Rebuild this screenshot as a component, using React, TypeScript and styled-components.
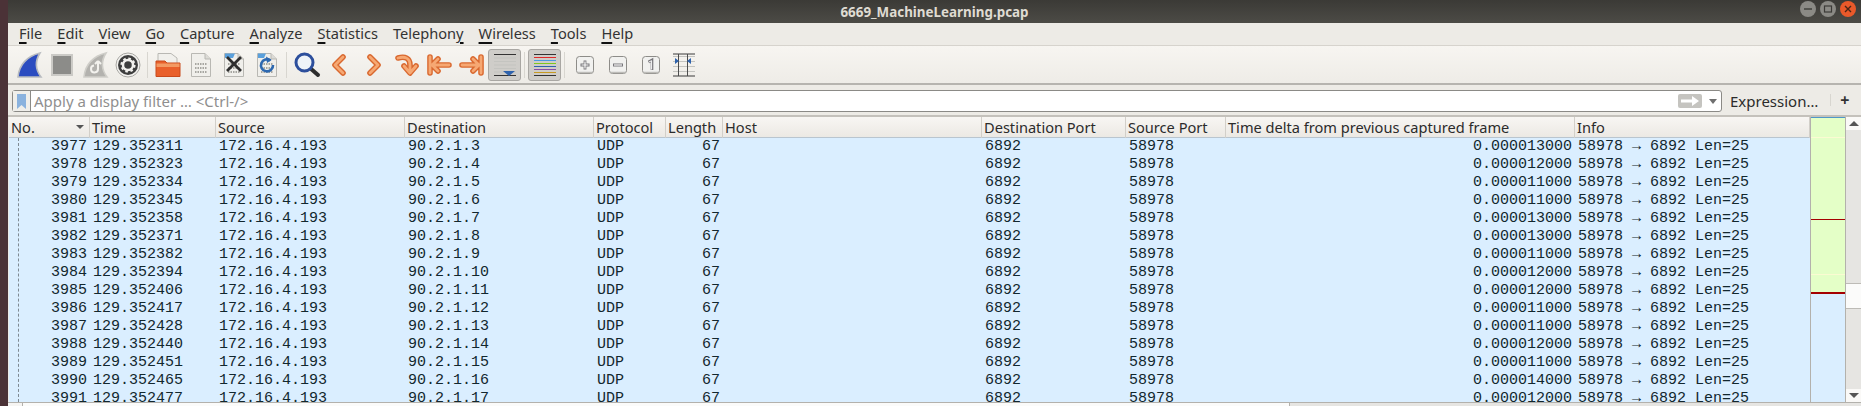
import styled, { createGlobalStyle } from "styled-components";

const COLUMNS = "81px 126px 189px 189px 72px 57px 259px 144px 100px 349px 235px";

const packets = [
  [3977, "129.352311", 3, "0.000013000"],
  [3978, "129.352323", 4, "0.000012000"],
  [3979, "129.352334", 5, "0.000011000"],
  [3980, "129.352345", 6, "0.000011000"],
  [3981, "129.352358", 7, "0.000013000"],
  [3982, "129.352371", 8, "0.000013000"],
  [3983, "129.352382", 9, "0.000011000"],
  [3984, "129.352394", 10, "0.000012000"],
  [3985, "129.352406", 11, "0.000012000"],
  [3986, "129.352417", 12, "0.000011000"],
  [3987, "129.352428", 13, "0.000011000"],
  [3988, "129.352440", 14, "0.000012000"],
  [3989, "129.352451", 15, "0.000011000"],
  [3990, "129.352465", 16, "0.000014000"],
  [3991, "129.352477", 17, "0.000012000"],
] as const;

const menus: [string, string, string][] = [
  ["", "F", "ile"],
  ["", "E", "dit"],
  ["", "V", "iew"],
  ["", "G", "o"],
  ["", "C", "apture"],
  ["", "A", "nalyze"],
  ["", "S", "tatistics"],
  ["Telephon", "y", ""],
  ["", "W", "ireless"],
  ["", "T", "ools"],
  ["", "H", "elp"],
];

const headers = [
  "No.",
  "Time",
  "Source",
  "Destination",
  "Protocol",
  "Length",
  "Host",
  "Destination Port",
  "Source Port",
  "Time delta from previous captured frame",
  "Info",
];

const Fin = ({ muted }: { muted?: boolean }) => (
  <svg width="28" height="28" viewBox="0 0 28 28">
    <path
      d="M3 26C4 14 12 5 25 2C20 10 20 18 26 26Z"
      fill={muted ? "#b3b2ae" : "#2b4cc0"}
      stroke={muted ? "#cfcec9" : "#b9bcc0"}
      strokeWidth="1.6"
    />
    {muted && (
      <path
        d="M17 10v8a3.5 3.5 0 1 1-4-3.5M17 10l-3 3M17 10l3 3"
        fill="none"
        stroke="#f3f2ee"
        strokeWidth="2"
      />
    )}
  </svg>
);

const Stop = () => (
  <svg width="24" height="24" viewBox="0 0 24 24">
    <rect x="2" y="2" width="20" height="20" fill="#8c8c89" stroke="#cbcac6" strokeWidth="2" />
  </svg>
);

const Gear = () => (
  <svg width="26" height="26" viewBox="0 0 26 26">
    <circle cx="13" cy="13" r="12" fill="#f2f1ee" stroke="#a9a8a4" strokeWidth="1" />
    <circle cx="13" cy="13" r="10" fill="#3e3e3e" />
    <circle cx="13" cy="13" r="5" fill="none" stroke="#f2f1ee" strokeWidth="2.5" />
    <circle cx="13" cy="13" r="6.6" fill="none" stroke="#f2f1ee" strokeWidth="2" strokeDasharray="2.6 2.6" />
  </svg>
);

const Doc = ({ children }: { children?: React.ReactNode }) => (
  <svg width="22" height="26" viewBox="0 0 22 26">
    <path d="M1.5 1.5H15L20.5 7V24.5H1.5Z" fill="#f0efeb" stroke="#b9b8b3" />
    <path d="M15 1.5V7H20.5" fill="#dcdbd6" stroke="#b9b8b3" />
    <path
      d="M5 12H17M5 16H17M5 20H17"
      stroke="#a7a6a1"
      strokeWidth="2"
      strokeDasharray="1.5 1"
    />
    {children}
  </svg>
);

const OpenFile = () => (
  <svg width="26" height="26" viewBox="0 0 26 26">
    <path d="M3 1.5H16L22 6V14H3Z" fill="#f1f0ec" stroke="#b9b8b3" />
    <path d="M1 9H10L12 11H25V24.5H1Z" fill="#e9602b" stroke="#c84a1c" />
    <path d="M1.5 11.5H24.5V15H1.5Z" fill="#f39a63" />
  </svg>
);

const CloseFile = () => (
  <Doc>
    <path d="M2 1.5H12L10 6H2Z" fill="#5aa0dc" />
    <path d="M4 5L18 19M18 5L4 19" stroke="#2d2d2d" strokeWidth="2.8" />
  </Doc>
);

const ReloadFile = () => (
  <Doc>
    <path d="M2 1.5H10L8 6H2Z" fill="#5aa0dc" />
    <path
      d="M14.5 8.5A6 6 0 1 0 17 13"
      fill="none"
      stroke="#2d68b0"
      strokeWidth="2.6"
    />
    <path d="M10 4.5L15.5 8L11 11Z" fill="#2d68b0" />
  </Doc>
);

const Search = () => (
  <svg width="28" height="28" viewBox="0 0 28 28">
    <path d="M17 17L25 24" stroke="#2d2d2d" strokeWidth="4" strokeLinecap="round" />
    <circle cx="11.5" cy="11.5" r="8.5" fill="#eef3f8" stroke="#2d4f9c" strokeWidth="3" />
  </svg>
);

const Stroke = ({ d }: { d: string }) => (
  <>
    <path d={d} fill="none" stroke="#d9682f" strokeWidth="5.6" strokeLinecap="round" strokeLinejoin="round" />
    <path d={d} fill="none" stroke="#f6a873" strokeWidth="2.8" strokeLinecap="round" strokeLinejoin="round" />
  </>
);

const Arrow = ({ d }: { d: string }) => (
  <svg width="26" height="26" viewBox="0 0 26 26">
    <Stroke d={d} />
  </svg>
);

const LineList = ({ colors, marker }: { colors: string[]; marker?: boolean }) => (
  <svg width="24" height="24" viewBox="0 0 24 24">
    {colors.map((c, i) => (
      <rect key={i} x="1" y={1 + i * (21 / (colors.length - 1))} width="22" height="1" fill={c} />
    ))}
    {marker && <path d="M10 18H22L16 23Z" fill="#2f63ad" />}
  </svg>
);

const ZoomKey = ({ children }: { children: React.ReactNode }) => (
  <svg width="20" height="20" viewBox="0 0 20 20">
    <rect x="1.5" y="1.5" width="17" height="17" rx="3" fill="#f1f1ef" stroke="#8d8c88" />
    <path d="M2.5 17.5H17.5" stroke="#bdbcb8" strokeWidth="1.5" />
    {children}
  </svg>
);

const ResizeColumns = () => (
  <svg width="24" height="24" viewBox="0 0 24 24">
    <path d="M1 3.5H23M1 8.5H23M1 13.5H23M1 18.5H23" stroke="#c4c4c0" />
    <path d="M1 1H23M1 23H23" stroke="#3a3a3a" />
    <path d="M6.5 1V23M15.5 1V23" stroke="#4c4c4c" />
    <path d="M3 5L7 8L3 11ZM19 5L15 8L19 11Z" fill="#2f63ad" />
  </svg>
);

const App = () => (
  <Window>
    <GlobalStyle />
    <DesktopEdge />
    <Main>
      <TitleBar>
        <Title>6669_MachineLearning.pcap</Title>
        <WindowButtons>
          <WindowButton>
            <svg width="10" height="10" viewBox="0 0 10 10">
              <path d="M1 5H9" stroke="#3c3b37" strokeWidth="1.4" />
            </svg>
          </WindowButton>
          <WindowButton>
            <svg width="10" height="10" viewBox="0 0 10 10">
              <rect x="1.5" y="2" width="7" height="6" fill="none" stroke="#3c3b37" strokeWidth="1.2" />
            </svg>
          </WindowButton>
          <WindowButton $close>
            <svg width="10" height="10" viewBox="0 0 10 10">
              <path d="M2 2L8 8M8 2L2 8" stroke="#4a2415" strokeWidth="1.4" />
            </svg>
          </WindowButton>
        </WindowButtons>
      </TitleBar>

      <MenuBar>
        {menus.map(([before, key, after]) => (
          <MenuItem key={before + key + after}>
            {before}
            <Mnemonic>{key}</Mnemonic>
            {after}
          </MenuItem>
        ))}
      </MenuBar>

      <ToolBar>
        <ToolButton><Fin /></ToolButton>
        <ToolButton><Stop /></ToolButton>
        <ToolButton><Fin muted /></ToolButton>
        <ToolButton><Gear /></ToolButton>
        <ToolSeparator />
        <ToolButton><OpenFile /></ToolButton>
        <ToolButton><Doc /></ToolButton>
        <ToolButton><CloseFile /></ToolButton>
        <ToolButton><ReloadFile /></ToolButton>
        <ToolSeparator />
        <ToolButton><Search /></ToolButton>
        <ToolButton><Arrow d="M16 5L8 13L16 21" /></ToolButton>
        <ToolButton><Arrow d="M10 5L18 13L10 21" /></ToolButton>
        <ToolButton><Arrow d="M5 6C12 4 17 6 17 13V19M11 14L17 21L23 14" /></ToolButton>
        <ToolButton><Arrow d="M4 5V21M23 13H6M12 7L6 13L12 19" /></ToolButton>
        <ToolButton><Arrow d="M22 5V21M3 13H20M14 7L20 13L14 19" /></ToolButton>
        <ToolButton $checked>
          <LineList marker colors={["#333", "#c4c4c0", "#c4c4c0", "#c4c4c0", "#c4c4c0", "#c4c4c0", "#333"]} />
        </ToolButton>
        <ToolSeparator />
        <ToolButton $checked>
          <LineList colors={["#333", "#e02a2a", "#4c9be0", "#7fc81e", "#2f63ad", "#8a4fa8", "#c79a22", "#333"]} />
        </ToolButton>
        <ToolSeparator />
        <ToolButton>
          <ZoomKey>
            <path d="M10 5.5V14.5M5.5 10H14.5" stroke="#77767a" strokeWidth="2.8" />
            <path d="M10 6.5V13.5M6.5 10H13.5" stroke="#fafafa" strokeWidth="1.2" />
          </ZoomKey>
        </ToolButton>
        <ToolButton>
          <ZoomKey>
            <path d="M5 10H15" stroke="#77767a" strokeWidth="3" />
            <path d="M6 10H14" stroke="#fafafa" strokeWidth="1.2" />
          </ZoomKey>
        </ToolButton>
        <ToolButton>
          <ZoomKey>
            <path d="M7.5 7L11 5V15" fill="none" stroke="#77767a" strokeWidth="2.6" />
            <path d="M8 7L10.6 5.7V14.5" fill="none" stroke="#fafafa" strokeWidth="1" />
          </ZoomKey>
        </ToolButton>
        <ToolButton><ResizeColumns /></ToolButton>
      </ToolBar>

      <FilterBar>
        <FilterBox>
          <BookmarkCell>
            <svg width="9" height="15" viewBox="0 0 9 15">
              <path d="M0 0H9V15L4.5 11L0 15Z" fill="#8ab2de" />
            </svg>
          </BookmarkCell>
          <FilterHint>Apply a display filter … &lt;Ctrl-/&gt;</FilterHint>
          <ApplyButton>
            <svg width="18" height="10" viewBox="0 0 18 10">
              <path d="M0 3.5H11V0L18 5L11 10V6.5H0Z" fill="#fff" />
            </svg>
          </ApplyButton>
          <DropArrow />
        </FilterBox>
        <ExpressionLabel>Expression…</ExpressionLabel>
        <PlusDivider />
        <PlusLabel>+</PlusLabel>
      </FilterBar>

      <PacketArea>
        <PacketPane>
          <ListHeader>
            {headers.map((h, i) => (
              <HeaderCell key={h}>
                {h}
                {i === 0 && <SortCaret />}
              </HeaderCell>
            ))}
          </ListHeader>
          <Rows>
            <TreeLine />
            {packets.map(([no, time, host, delta]) => (
              <Row key={no}>
                <Cell $right>{no}</Cell>
                <Cell>{time}</Cell>
                <Cell>172.16.4.193</Cell>
                <Cell>90.2.1.{host}</Cell>
                <Cell>UDP</Cell>
                <Cell $right>67</Cell>
                <Cell />
                <Cell>6892</Cell>
                <Cell>58978</Cell>
                <Cell $right>{delta}</Cell>
                <Cell>58978 → 6892 Len=25</Cell>
              </Row>
            ))}
          </Rows>
        </PacketPane>

        <MiniMap>
          <MapBand $height={1} $color="#4f97c9" />
          <MapBand $height={19} $color="#e4ffc7" />
          <MapBand $height={1} $color="#fbfbd2" />
          <MapBand $height={81} $color="#e4ffc7" />
          <MapBand $height={1} $color="#a40000" />
          <MapBand $height={54} $color="#e4ffc7" />
          <MapBand $height={1} $color="#fbfbd2" />
          <MapBand $height={17} $color="#e4ffc7" />
          <MapBand $height={2} $color="#a40000" />
          <MapBand $height={109} $color="#daeeff" />
        </MiniMap>

        <ScrollBar>
          <ScrollEnd>
            <ScrollCaret />
          </ScrollEnd>
          <ScrollTrack $height={153} />
          <ScrollThumb />
          <ScrollTrack $height={80} />
          <ScrollEnd>
            <ScrollCaret $down />
          </ScrollEnd>
        </ScrollBar>
      </PacketArea>

      <BottomScroll>
        <BottomEnd />
        <BottomThumb />
      </BottomScroll>
    </Main>
  </Window>
);

const GlobalStyle = createGlobalStyle`
  html, body {
    margin: 0;
    height: 406px;
    overflow: hidden;
    background: #edebe6;
  }
`;

const UI_FONT = `"Noto Sans", "DejaVu Sans", sans-serif`;

const Window = styled.div`
  display: flex;
  width: 1861px;
  height: 406px;
  overflow: hidden;
  font-family: ${UI_FONT};
`;

const DesktopEdge = styled.div`
  flex: 0 0 8px;
  background: #4b3237;
`;

const Main = styled.div`
  flex: 1;
  min-width: 0;
  display: flex;
  flex-direction: column;
`;

const TitleBar = styled.div`
  flex: 0 0 23px;
  position: relative;
  display: flex;
  align-items: center;
  justify-content: center;
  background: linear-gradient(#3b3a36, #4c4b46);
`;

const Title = styled.div`
  font-size: 13.4px;
  font-weight: 700;
  color: #dfdbd2;
`;

const WindowButtons = styled.div`
  position: absolute;
  right: 5px;
  top: 1px;
  display: flex;
  gap: 4px;
`;

const WindowButton = styled.div<{ $close?: boolean }>`
  width: 16px;
  height: 16px;
  border-radius: 50%;
  display: flex;
  align-items: center;
  justify-content: center;
  background: ${({ $close }) => ($close ? "#e9592a" : "#8b8a85")};
`;

const MenuBar = styled.div`
  flex: 0 0 22px;
  box-sizing: border-box;
  display: flex;
  align-items: center;
  gap: 15px;
  padding: 0 0 2px 11px;
  background: #edebe6;
  border-bottom: 1px solid #d6d3cd;
`;

const MenuItem = styled.div`
  font-size: 14.6px;
  line-height: 20px;
  color: #333;
`;

const Mnemonic = styled.span`
  text-decoration: underline;
  text-decoration-thickness: 2px;
  text-underline-offset: 3px;
  text-decoration-color: #111;
`;

const ToolBar = styled.div`
  flex: 0 0 39px;
  box-sizing: border-box;
  display: flex;
  align-items: center;
  padding-left: 4px;
  background: linear-gradient(#f7f5f1, #eeece7);
  border-bottom: 2px solid #b6b4af;
`;

const ToolButton = styled.div<{ $checked?: boolean }>`
  flex: 0 0 33px;
  height: 32px;
  box-sizing: border-box;
  display: flex;
  align-items: center;
  justify-content: center;
  border-radius: 3px;
  background: ${({ $checked }) => ($checked ? "#cfcdc9" : "transparent")};
  border: 1px solid ${({ $checked }) => ($checked ? "#a9a7a3" : "transparent")};
`;

const ToolSeparator = styled.div`
  flex: 0 0 1px;
  height: 26px;
  margin: 0 3px;
  background: #d8d6d0;
`;

const FilterBar = styled.div`
  flex: 0 0 32px;
  box-sizing: border-box;
  display: flex;
  align-items: flex-start;
  padding: 5px 0 0 4px;
  background: #edebe6;
  border-bottom: 2px solid #c4c1bb;
`;

const FilterBox = styled.div`
  flex: 0 0 1710px;
  height: 22px;
  box-sizing: border-box;
  display: flex;
  align-items: center;
  background: #fff;
  border: 1px solid #8b8a86;
  border-radius: 3px;
`;

const BookmarkCell = styled.div`
  flex: 0 0 18px;
  height: 100%;
  box-sizing: border-box;
  display: flex;
  align-items: center;
  justify-content: center;
  background: #efeeea;
  border-right: 1px solid #8b8a86;
`;

const FilterHint = styled.div`
  flex: 1;
  padding-left: 3px;
  font-size: 15px;
  color: #8f8f8f;
`;

const ApplyButton = styled.div`
  flex: 0 0 24px;
  height: 14px;
  display: flex;
  align-items: center;
  justify-content: center;
  border-radius: 2px;
  background: #c5c4c0;
`;

const DropArrow = styled.div`
  margin: 0 4px 0 7px;
  width: 0;
  height: 0;
  border-left: 4px solid transparent;
  border-right: 4px solid transparent;
  border-top: 5px solid #6f6f6f;
`;

const ExpressionLabel = styled.div`
  margin: 1px 0 0 8px;
  font-size: 15px;
  line-height: 20px;
  color: #2b2b2b;
`;

const PlusDivider = styled.div`
  width: 1px;
  height: 12px;
  margin: 4px 0 0 12px;
  background: #d8d6d0;
`;

const PlusLabel = styled.div`
  margin-left: 9px;
  font-size: 16px;
  font-weight: 700;
  line-height: 20px;
  color: #333;
`;

const PacketArea = styled.div`
  flex: 1;
  min-height: 0;
  display: flex;
`;

const PacketPane = styled.div`
  flex: 0 0 1801px;
  margin-left: 1px;
  overflow: hidden;
  display: flex;
  flex-direction: column;
  border-right: 1px solid #b3b1ac;
`;

const ListHeader = styled.div`
  flex: 0 0 21px;
  display: grid;
  grid-template-columns: ${COLUMNS};
  background: linear-gradient(#f8f6f3, #ebe8e3);
  box-shadow: inset 0 -1px 0 #b9c5cf;
`;

const HeaderCell = styled.div`
  position: relative;
  box-sizing: border-box;
  padding-left: 2px;
  font-size: 14.6px;
  line-height: 20px;
  white-space: nowrap;
  overflow: hidden;
  color: #2b2b2b;
  border-right: 1px solid #d2cfc9;
`;

const SortCaret = styled.span`
  position: absolute;
  right: 5px;
  top: 8px;
  width: 0;
  height: 0;
  border-left: 4px solid transparent;
  border-right: 4px solid transparent;
  border-top: 4px solid #555;
`;

const Rows = styled.div`
  position: relative;
  flex: 1;
  min-height: 0;
  overflow: hidden;
  background: #daeeff;
`;

const TreeLine = styled.div`
  position: absolute;
  left: 9px;
  top: 0;
  bottom: 0;
  border-left: 1px dashed #7f8a93;
`;

const Row = styled.div`
  display: grid;
  grid-template-columns: ${COLUMNS};
  height: 18px;
  font-family: "Liberation Mono", monospace;
  font-size: 15px;
  line-height: 18px;
  color: #12272e;
`;

const Cell = styled.div<{ $right?: boolean }>`
  padding: 0 3px;
  white-space: nowrap;
  text-align: ${({ $right }) => ($right ? "right" : "left")};
`;

const MiniMap = styled.div`
  flex: 0 0 34px;
  display: flex;
  flex-direction: column;
  margin-left: 0;
  border-right: 1px solid #b3b1ac;
  overflow: hidden;
`;

const MapBand = styled.div<{ $height: number; $color: string }>`
  flex: 0 0 ${({ $height }) => $height}px;
  background: ${({ $color }) => $color};
`;

const ScrollBar = styled.div`
  flex: 0 0 15px;
  display: flex;
  flex-direction: column;
  background: #e6e5e2;
`;

const ScrollEnd = styled.div`
  flex: 0 0 13px;
  display: flex;
  align-items: center;
  justify-content: center;
  background: #faf9f7;
`;

const ScrollCaret = styled.div<{ $down?: boolean }>`
  width: 0;
  height: 0;
  border-left: 5px solid transparent;
  border-right: 5px solid transparent;
  ${({ $down }) =>
    $down ? "border-top: 5px solid #555;" : "border-bottom: 5px solid #555;"}
`;

const ScrollTrack = styled.div<{ $height: number }>`
  flex: 0 0 ${({ $height }) => $height}px;
  background: #e6e5e2;
`;

const ScrollThumb = styled.div`
  flex: 0 0 26px;
  box-sizing: border-box;
  background: #fbfbfa;
  border-top: 1px solid #bdbbb6;
  border-bottom: 1px solid #bdbbb6;
`;

const BottomScroll = styled.div`
  flex: 0 0 4px;
  display: flex;
  background: #e6e5e2;
  border-top: 1px solid #b3b1ac;
  box-sizing: border-box;
`;

const BottomEnd = styled.div`
  flex: 0 0 14px;
  background: #f6f5f3;
  border-right: 1px solid #b3b1ac;
`;

const BottomThumb = styled.div`
  flex: 0 0 1266px;
  background: #fbfbfa;
  border-right: 1px solid #b3b1ac;
`;

export default App;
